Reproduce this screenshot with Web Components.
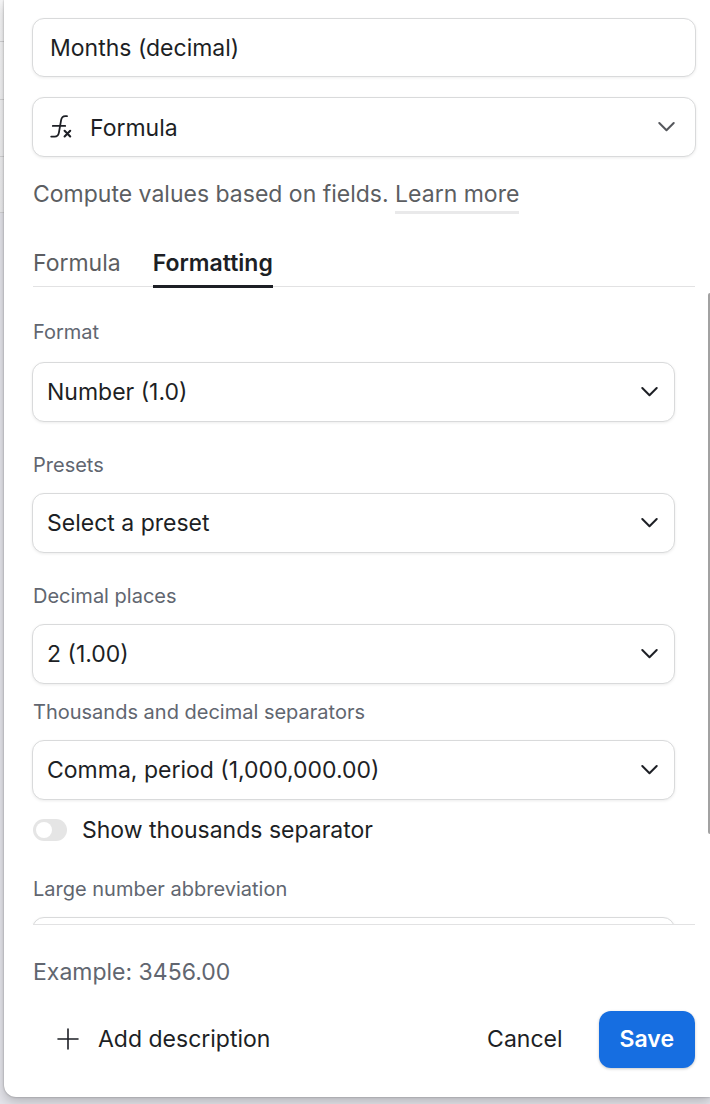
<!DOCTYPE html>
<html lang="en">
<head>
<meta charset="utf-8">
<meta name="viewport" content="width=device-width, initial-scale=1">
<title>Edit field</title>
<style>
  html, body { margin: 0; height: 100%; }
  body {
    font-family: Inter, "Liberation Sans", sans-serif;
    font-size: 23px;
    line-height: 32px;
    color: #1d1f25;
    --text: #1d1f25;
    --muted: #616670;
    --line: #e2e2e3;
    --border: #d9dadb;
    --accent: #166ee1;
    overflow: hidden;
  }
</style>
</head>
<body>
<field-editor>
  <text-box slot="head" label="Field name" value="Months (decimal)"></text-box>
  <select-box slot="head" class="type" name="Field type" value="Formula" icon="formula"></select-box>
  <help-line slot="head" href="#formula-help" link="Learn more">Compute values based on fields.</help-line>
  <tab-strip slot="head" tabs="Formula,Formatting" active="Formatting"></tab-strip>

  <select-box class="roomy" value="Number (1.0)">Format</select-box>
  <select-box value="Select a preset">Presets</select-box>
  <select-box value="2 (1.00)">Decimal places</select-box>
  <select-box class="tight" value="Comma, period (1,000,000.00)">Thousands and decimal separators</select-box>
  <toggle-row>Show thousands separator</toggle-row>
  <select-box value="None">Large number abbreviation</select-box>

  <span slot="example">Example: 3456.00</span>
  <action-button slot="actions" class="start" kind="plus">Add description</action-button>
  <action-button slot="actions">Cancel</action-button>
  <action-button slot="actions" kind="primary">Save</action-button>
</field-editor>

<template id="field-editor">
  <style>
    :host {
      display: block; box-sizing: border-box; height: 100vh; padding: 0 0 7px 4px;
      background:
        linear-gradient(#d2d2d4, #d2d2d4) 0 41px / 4px 1px no-repeat,
        linear-gradient(#d2d2d4, #d2d2d4) 0 99px / 4px 1px no-repeat,
        linear-gradient(#d2d2d4, #d2d2d4) 0 156px / 4px 1px no-repeat,
        linear-gradient(#d2d2d4, #d2d2d4) 0 212px / 4px 1px no-repeat,
        linear-gradient(#f6f6f7, #ececee) 0 0 / 4px 212px no-repeat,
        #e4e4ea;
    }
    section {
      display: flex; flex-direction: column; box-sizing: border-box; height: 100%;
      background: #fff; border-bottom-left-radius: 12px;
      box-shadow: 0 0 2px rgba(0,0,0,.36), 0 5px 12px rgba(0,0,0,.2);
    }
    header { padding: 18px 14px 0 28px; }
    .scroll { position: relative; flex: 1; min-height: 0; }
    .fields { height: 100%; box-sizing: border-box; overflow-y: auto; scrollbar-width: none; padding: 2px 35px 0 28px; }
    .thumb { position: absolute; right: 0; top: 6px; width: 2px; height: 85%; background: #a2a2a2; border-top-left-radius: 2px; border-bottom-left-radius: 2px; }
    footer { margin: 0 15px 0 29px; border-top: 1px solid var(--line); padding: 31px 0 29px; }
    .example { color: var(--muted); }
    .actions { display: flex; align-items: center; margin-top: 23px; }
  </style>
  <section>
    <header><slot name="head"></slot></header>
    <div class="scroll">
      <div class="fields"><slot></slot></div>
      <div class="thumb"></div>
    </div>
    <footer>
      <div class="example"><slot name="example"></slot></div>
      <div class="actions"><slot name="actions"></slot></div>
    </footer>
  </section>
</template>

<template id="text-box">
  <style>
    :host { display: block; }
    input {
      display: block; box-sizing: border-box; width: 100%; height: 59px; padding: 1px 17px 0; margin: 0;
      border: 1px solid var(--border); border-radius: 12px; background: #fff; color: var(--text);
      font: inherit; box-shadow: 0 1px 3px rgba(0,0,0,.07); outline: none;
    }
  </style>
  <input type="text">
</template>

<template id="select-box">
  <style>
    :host { display: block; padding-top: 29px; }
    :host(.type) { padding-top: 20px; }
    :host(.tight) { padding-top: 14px; }
    label { display: block; font-size: 20px; line-height: 28px; padding-left: 1px; margin-bottom: 14px; color: var(--muted); }
    :host(.roomy) label { margin-bottom: 16px; }
    :host(.type) label { display: none; }
    .box { display: grid; align-items: center; }
    .box > * { grid-area: 1 / 1; }
    select {
      appearance: none; box-sizing: border-box; width: 100%; height: 60px; margin: 0; padding: 0 48px 0 14px;
      border: 1px solid var(--border); border-radius: 12px; background: #fff; color: var(--text);
      font: inherit; box-shadow: 0 1px 3px rgba(0,0,0,.08); outline: none;
    }
    :host(.type) select { padding-left: 57px; padding-top: 2px; }
    svg { pointer-events: none; fill: none; stroke: currentColor; stroke-linecap: round; stroke-linejoin: round; }
    .chevron { justify-self: end; margin-right: 17px; color: var(--text); stroke-width: 2; }
    :host(.type) .chevron { margin-right: 21px; color: #55575c; }
    .fx { display: none; margin-left: 18px; stroke-width: 1.8; }
    :host([icon]) .fx { display: block; }
  </style>
  <label for="control"><slot></slot></label>
  <div class="box">
    <select id="control"><option></option></select>
    <svg class="fx" width="24" height="26" viewBox="0 0 24 26"><path d="M17 2.200h-1.800c-2.600 0-3.600 1.400-4.100 4L8.900 18.600c-.5 2.800-1.600 4-4.200 4H1.200M2.800 11.900h12.400"/><path stroke-width="2.100" d="m14.600 16.800 5.600 5.600m0-5.600-5.600 5.600"/></svg>
    <svg class="chevron" width="17" height="12" viewBox="0 0 17 12"><path d="m1.300 2 7.200 7.200L15.700 2"/></svg>
  </div>
</template>

<template id="help-line">
  <style>
    :host { display: block; padding: 21px 0 0 1px; color: #5c5e62; }
    a { display: inline-block; color: inherit; text-decoration: none; border-bottom: 3px solid #e9e9ea; line-height: 33px; }
  </style>
  <slot></slot> <a></a>
</template>

<template id="tab-strip">
  <style>
    :host { display: block; padding: 28px 1px 0; }
    div { display: flex; gap: 32px; border-bottom: 1px solid var(--line); }
    button { font: inherit; color: #5c5e62; background: none; border: 0; border-bottom: 3px solid transparent; margin: 0 0 -2px; padding: 5px 0 6px; }
    button[aria-selected="true"] { color: var(--text); font-weight: 600; border-color: var(--text); }
  </style>
  <div role="tablist"></div>
</template>

<template id="toggle-row">
  <style>
    :host { display: block; padding: 14px 0 0 1px; }
    label { display: flex; align-items: center; gap: 15px; }
    input { appearance: none; display: flex; align-items: center; box-sizing: border-box; width: 34px; height: 22px; margin: 0; padding: 3px; border-radius: 11px; background: #e5e5e5; }
    input::before { content: ""; width: 16px; height: 16px; border-radius: 8px; background: #fff; }
    input:checked { background: var(--accent); justify-content: end; }
  </style>
  <label><input type="checkbox" role="switch"><slot></slot></label>
</template>

<template id="action-button">
  <style>
    :host { display: block; }
    :host(.start) { margin-right: auto; }
    button { display: flex; align-items: center; gap: 19px; height: 57px; padding: 0 36px 1px; border: 0; border-radius: 12px; background: none; font: inherit; color: var(--text); }
    svg { display: none; }
    :host([kind="plus"]) button { padding: 0 24px 1px; }
    :host([kind="plus"]) svg { display: block; }
    :host([kind="primary"]) button { padding: 0 21px 1px; background: var(--accent); color: #fff; font-weight: 600; box-shadow: 0 1px 3px rgba(0,0,0,.22); }
  </style>
  <button type="button"><svg width="22" height="22" viewBox="0 0 22 22" fill="none" stroke="currentColor" stroke-width="1.600" stroke-linecap="round"><path d="M11 1v20M1 11h20"/></svg><span><slot></slot></span></button>
</template>

<script>
  class Base extends HTMLElement {
    constructor() {
      super();
      const t = document.getElementById(this.localName);
      this.attachShadow({ mode: "open" }).append(t.content.cloneNode(true));
    }
    $(selector) { return this.shadowRoot.querySelector(selector); }
  }

  customElements.define("field-editor", class extends Base {});
  customElements.define("toggle-row", class extends Base {});
  customElements.define("action-button", class extends Base {});

  customElements.define("text-box", class extends Base {
    connectedCallback() {
      this.$("input").value = this.getAttribute("value");
      this.$("input").setAttribute("aria-label", this.getAttribute("label"));
    }
  });

  customElements.define("select-box", class extends Base {
    connectedCallback() {
      this.$("option").textContent = this.getAttribute("value");
      if (this.hasAttribute("name")) this.$("select").setAttribute("aria-label", this.getAttribute("name"));
    }
  });

  customElements.define("help-line", class extends Base {
    connectedCallback() {
      this.$("a").href = this.getAttribute("href");
      this.$("a").textContent = this.getAttribute("link");
    }
  });

  customElements.define("tab-strip", class extends Base {
    connectedCallback() {
      const active = this.getAttribute("active");
      this.$("div").replaceChildren(...this.getAttribute("tabs").split(",").map((name) => {
        const tab = document.createElement("button");
        tab.type = "button";
        tab.setAttribute("role", "tab");
        tab.setAttribute("aria-selected", String(name === active));
        tab.textContent = name;
        return tab;
      }));
    }
  });
</script>
</body>
</html>
